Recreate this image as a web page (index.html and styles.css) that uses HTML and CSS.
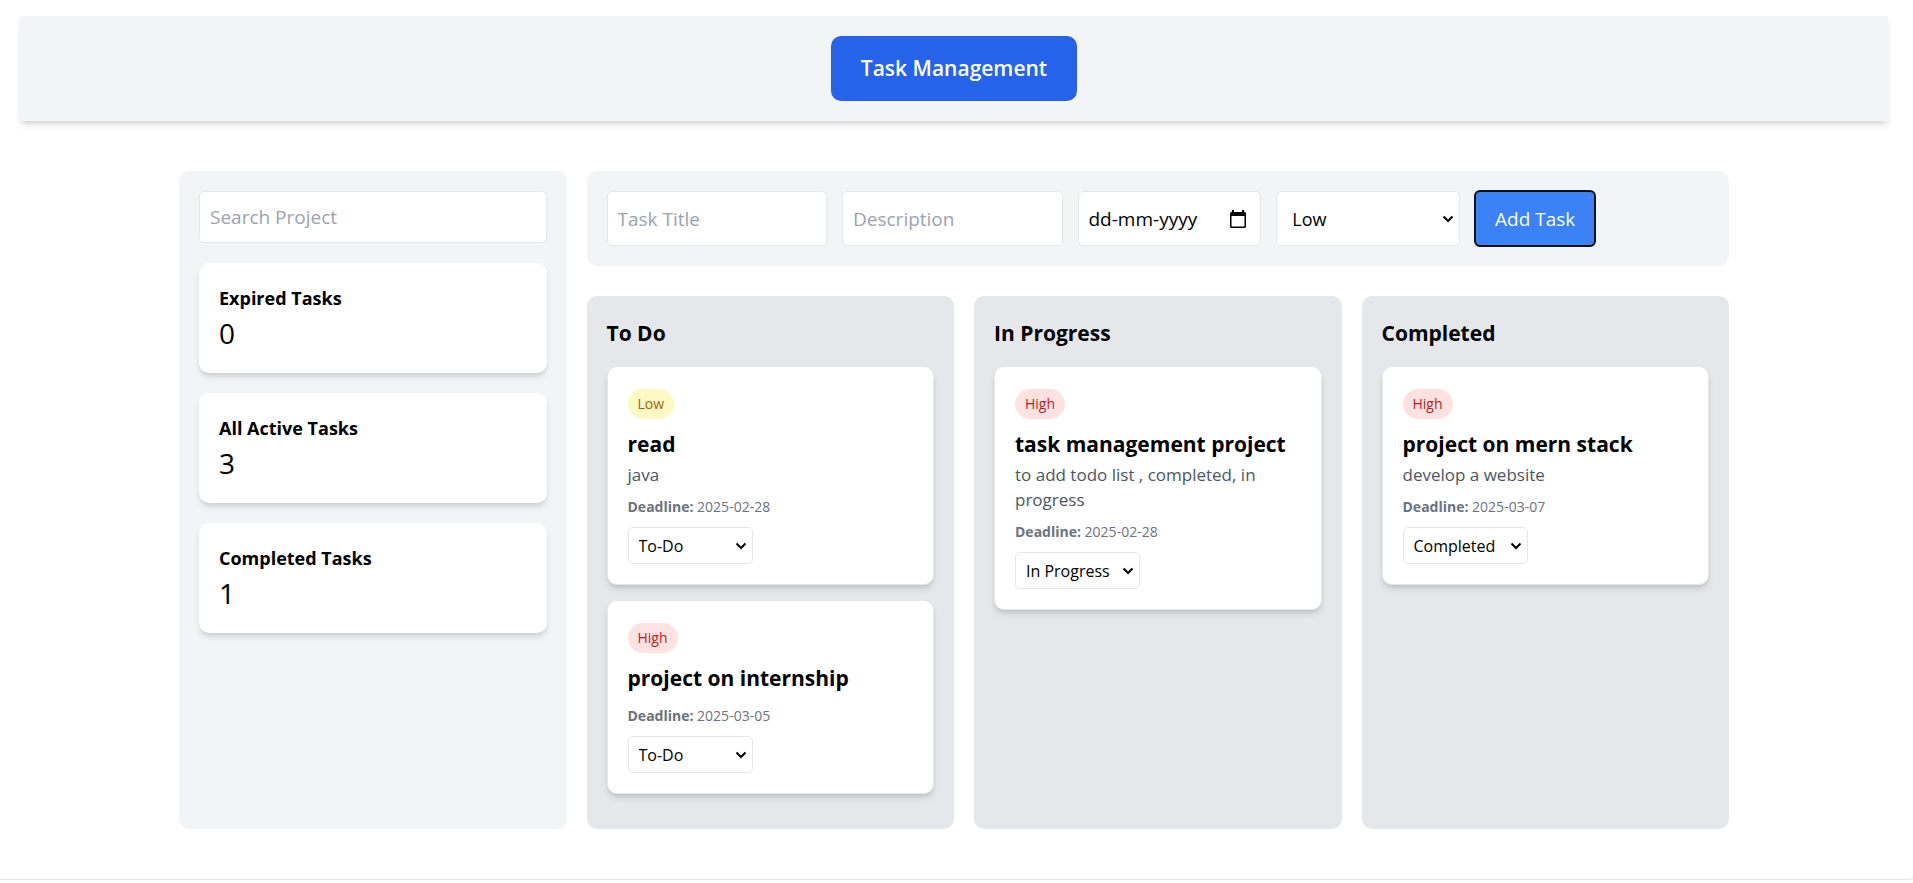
FILE: index.html
```html
<!DOCTYPE html>
<html lang="en">
<head>
<meta charset="utf-8">
<meta name="viewport" content="width=device-width, initial-scale=1">
<title>Task Management</title>
<link rel="stylesheet" href="styles.css">
</head>
<body>
<div class="page">
  <header class="header">
    <h1 class="brand">Task Management</h1>
  </header>
  <div class="layout">
    <aside class="sidebar">
      <input class="field search" type="text" placeholder="Search Project" aria-label="Search Project">
      <section class="stat"><h2 class="stat-title">Expired Tasks</h2><p class="stat-value">0</p></section>
      <section class="stat"><h2 class="stat-title">All Active Tasks</h2><p class="stat-value">3</p></section>
      <section class="stat"><h2 class="stat-title">Completed Tasks</h2><p class="stat-value">1</p></section>
    </aside>
    <main class="main">
      <form class="task-form">
        <input class="field wide" type="text" placeholder="Task Title" aria-label="Task Title">
        <input class="field wide" type="text" placeholder="Description" aria-label="Description">
        <div class="field date">
          <input class="date-input" type="text" value="dd-mm-yyyy" aria-label="Deadline">
          <button class="date-button" type="button" aria-label="Open calendar">
            <svg width="16" height="18" viewBox="0 0 16 18"><path fill="#000" fill-rule="evenodd" d="M2 0h2v2h8V0h2v2h.500A1.500 1.500 0 0 1 16 3.500v13a1.500 1.500 0 0 1-1.500 1.500h-13A1.500 1.500 0 0 1 0 16.500v-13A1.500 1.500 0 0 1 1.500 2H2zM1.500 6v10.500h13V6z"/></svg>
          </button>
        </div>
        <div class="select-box priority">
          <select class="select" aria-label="Priority"><option>Low</option><option>Medium</option><option>High</option></select>
          <svg class="chevron" width="12" height="8" viewBox="0 0 12 8"><path d="M1.500 1.500 6 6l4.500-4.500"/></svg>
        </div>
        <button class="add" type="button">Add Task</button>
      </form>
      <div class="board">
        <section class="column">
          <h2 class="column-title">To Do</h2>
          <article class="card">
            <span class="badge low">Low</span>
            <h3 class="card-title">read</h3>
            <p class="card-text">java</p>
            <p class="deadline"><strong>Deadline:</strong> 2025-02-28</p>
            <div class="select-box status">
              <select class="select" aria-label="Status"><option selected>To-Do</option><option>In Progress</option><option>Completed</option></select>
              <svg class="chevron" width="12" height="8" viewBox="0 0 12 8"><path d="M1.500 1.500 6 6l4.500-4.500"/></svg>
            </div>
          </article>
          <article class="card">
            <span class="badge high">High</span>
            <h3 class="card-title">project on internship</h3>
            <p class="card-text"></p>
            <p class="deadline"><strong>Deadline:</strong> 2025-03-05</p>
            <div class="select-box status">
              <select class="select" aria-label="Status"><option selected>To-Do</option><option>In Progress</option><option>Completed</option></select>
              <svg class="chevron" width="12" height="8" viewBox="0 0 12 8"><path d="M1.500 1.500 6 6l4.500-4.500"/></svg>
            </div>
          </article>
        </section>
        <section class="column">
          <h2 class="column-title">In Progress</h2>
          <article class="card">
            <span class="badge high">High</span>
            <h3 class="card-title">task management project</h3>
            <p class="card-text">to add todo list , completed, in progress</p>
            <p class="deadline"><strong>Deadline:</strong> 2025-02-28</p>
            <div class="select-box status">
              <select class="select" aria-label="Status"><option>To-Do</option><option selected>In Progress</option><option>Completed</option></select>
              <svg class="chevron" width="12" height="8" viewBox="0 0 12 8"><path d="M1.500 1.500 6 6l4.500-4.500"/></svg>
            </div>
          </article>
        </section>
        <section class="column">
          <h2 class="column-title">Completed</h2>
          <article class="card">
            <span class="badge high">High</span>
            <h3 class="card-title">project on mern stack</h3>
            <p class="card-text">develop a website</p>
            <p class="deadline"><strong>Deadline:</strong> 2025-03-07</p>
            <div class="select-box status">
              <select class="select" aria-label="Status"><option>To-Do</option><option>In Progress</option><option selected>Completed</option></select>
              <svg class="chevron" width="12" height="8" viewBox="0 0 12 8"><path d="M1.500 1.500 6 6l4.500-4.500"/></svg>
            </div>
          </article>
        </section>
      </div>
    </main>
  </div>
</div>
</body>
</html>
```

FILE: styles.css
```css
*, *::before, *::after { box-sizing: border-box; }
body {
  margin: 0;
  background: #fff;
  color: #000;
  font-family: "Segoe UI", "Open Sans", "Noto Sans", sans-serif;
  font-size: 19px;
}
h1, h2, h3, p { margin: 0; }
input, select, button { font: inherit; color: inherit; }

.page {
  padding: 16px 25px 50px 20px;
  border-bottom: 1px solid #e5e7eb;
  border-radius: 0 0 5px 0;
  box-shadow: 0 1px 3px rgba(0, 0, 0, 0.1);
}
.header {
  display: flex;
  justify-content: center;
  padding: 20px;
  background: #f3f4f6;
  box-shadow: 0 5px 7px -1px rgba(0, 0, 0, 0.1), 0 3px 5px -2px rgba(0, 0, 0, 0.1);
}
.brand {
  padding: 15px 30px;
  border-radius: 10px;
  background: #2563eb;
  color: #fff;
  font-size: 21px;
  font-weight: 600;
  line-height: 35px;
}
.layout {
  display: flex;
  gap: 20px;
  max-width: 1550px;
  margin: 50px auto 0;
}
.sidebar {
  display: flex;
  flex-direction: column;
  gap: 20px;
  flex: 0 0 25%;
  padding: 20px;
  border-radius: 10px;
  background: #f3f4f6;
}
.field {
  min-width: 0;
  padding: 10px;
  border: 1px solid #e5e7eb;
  border-radius: 5px;
  background: #fff;
}
.field::placeholder { color: #9ca3af; opacity: 1; }
.search { width: 100%; height: 52px; }
.stat {
  padding: 20px;
  border-radius: 10px;
  background: #fff;
  box-shadow: 0 5px 7px -1px rgba(0, 0, 0, 0.1), 0 3px 5px -2px rgba(0, 0, 0, 0.1);
}
.stat-title { font-size: 18px; font-weight: 700; line-height: 30px; }
.stat-value { font-size: 28px; line-height: 40px; }

.main {
  display: flex;
  flex: 1;
  flex-direction: column;
  gap: 30px;
  min-width: 0;
}
.task-form {
  display: flex;
  gap: 15px;
  padding: 20px;
  border-radius: 10px;
  background: #f3f4f6;
}
.wide { width: 20%; }
.date { display: flex; align-items: center; width: 16.6667%; height: 55px; padding-right: 14px; }
.date-input { flex: 1; min-width: 0; padding: 0; border: 0; background: none; outline: 0; }
.date-button { display: flex; padding: 0; border: 0; background: none; }

.select-box { display: grid; align-items: center; }
.select-box > * { grid-area: 1 / 1; }
.select {
  width: 100%;
  height: 100%;
  padding: 0 10px;
  border: 1px solid #e5e7eb;
  border-radius: 5px;
  background: #fff;
  appearance: none;
}
.chevron {
  justify-self: end;
  margin-right: 6px;
  fill: none;
  stroke: #000;
  stroke-width: 2;
  pointer-events: none;
}
.priority { width: 16.6667%; }
.priority .select { padding-left: 15px; font-size: 18px; }
.add {
  padding: 0 20px;
  border: 0;
  border-radius: 5px;
  outline: 2px solid #101010;
  outline-offset: -1px;
  background: #3b82f6;
  color: #fff;
}

.board {
  display: grid;
  flex: 1;
  grid-template-columns: repeat(3, minmax(0, 1fr));
  gap: 20px;
}
.column {
  padding: 20px 20px 35px;
  border-radius: 10px;
  background: #e5e7eb;
}
.column-title { font-size: 21px; font-weight: 700; line-height: 35px; }
.card {
  margin-top: 15px;
  padding: 20px;
  border: 1px solid #e5e7eb;
  border-radius: 10px;
  background: #fff;
  box-shadow: 0 5px 7px -1px rgba(0, 0, 0, 0.1), 0 3px 5px -2px rgba(0, 0, 0, 0.1);
}
.badge {
  display: block;
  width: fit-content;
  margin: 2px 0 8px;
  padding: 5px 10px;
  border-radius: 15px;
  font-size: 14px;
  line-height: 20px;
}
.low { background: #fef9c3; color: #a16207; }
.high { background: #fee2e2; color: #b91c1c; }
.card-title { font-size: 21px; font-weight: 700; line-height: 35px; }
.card-text { color: #4b5563; font-size: 17px; line-height: 25px; }
.deadline { margin: 10px 0; color: #6b7280; font-size: 14px; line-height: 20px; }
.status { width: 125px; height: 37px; font-size: 16px; }
```
